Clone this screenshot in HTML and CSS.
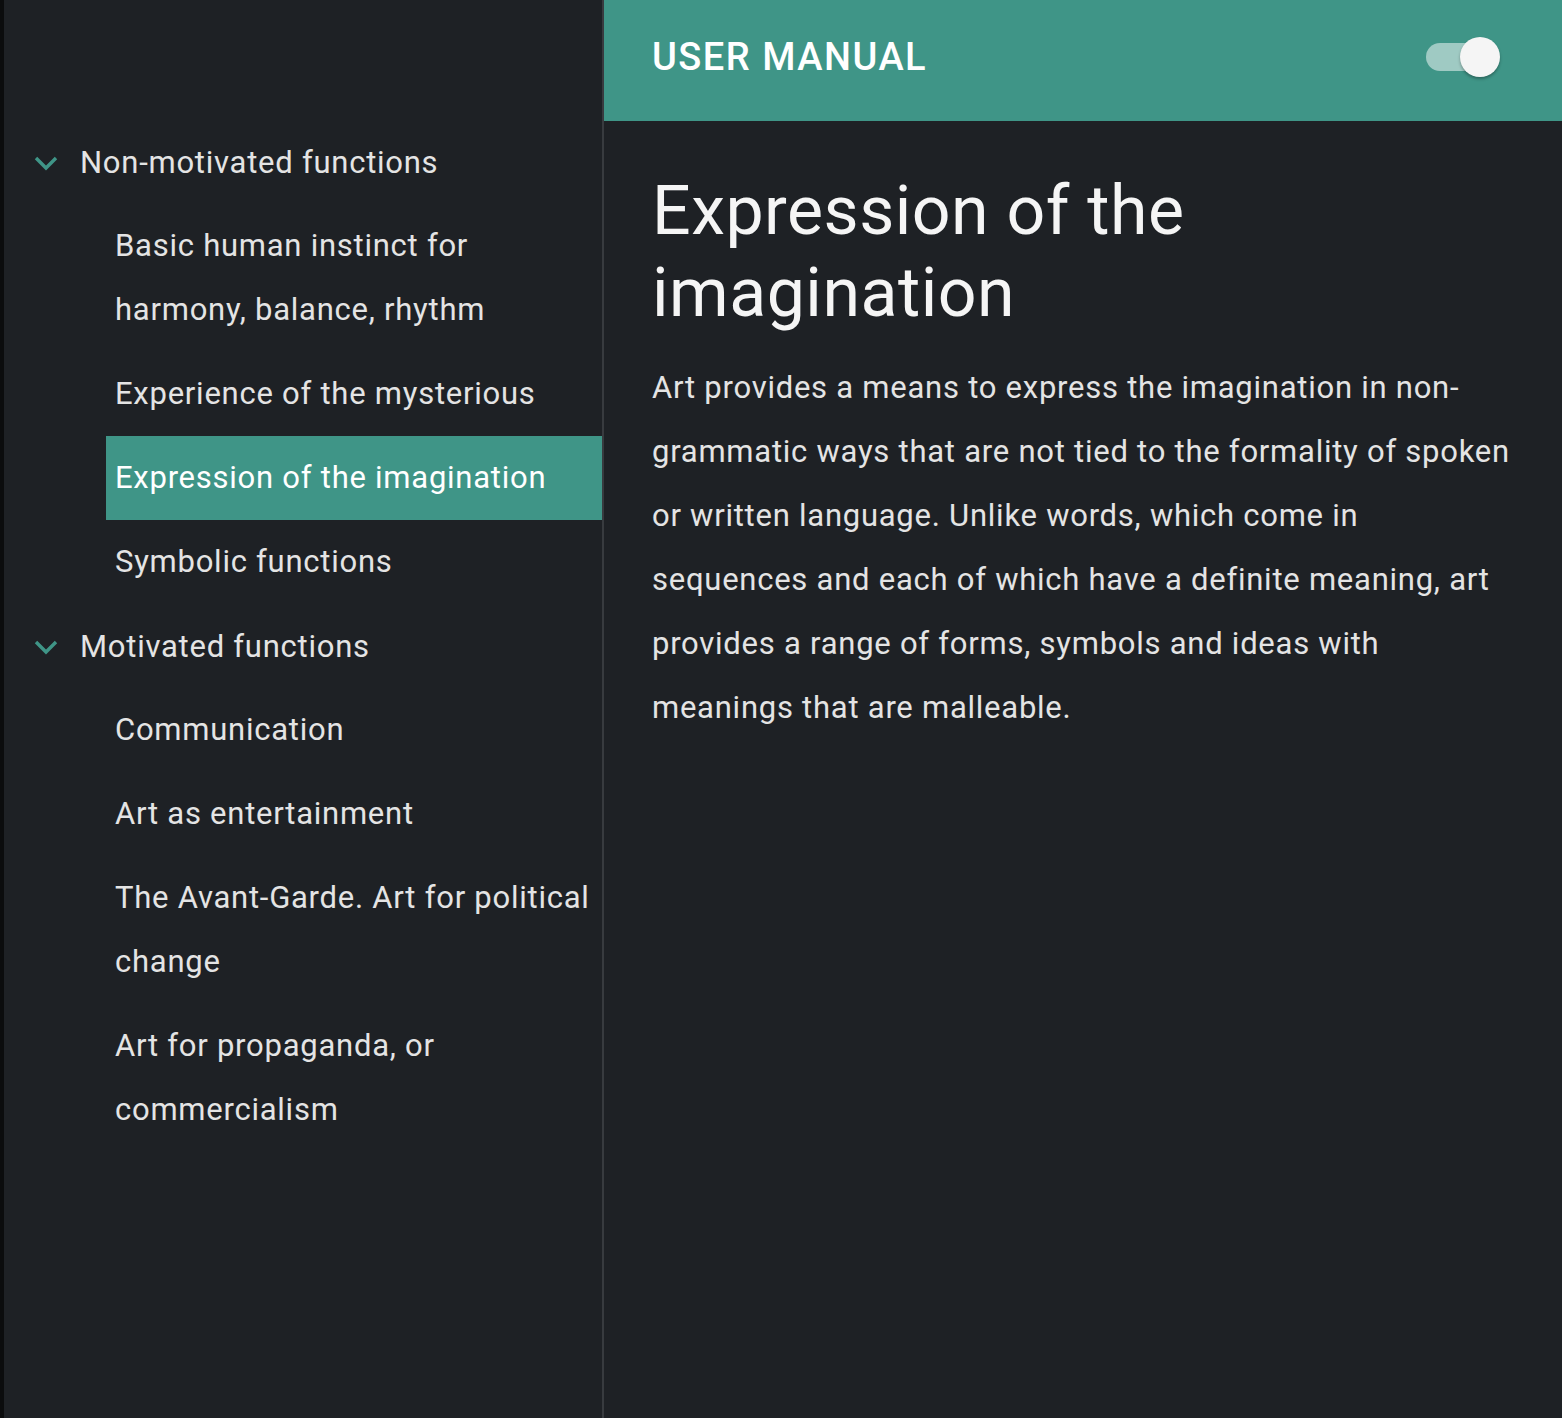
FILE: index.html
```html
<!DOCTYPE html>
<html lang="en">
<head>
<meta charset="utf-8">
<title>User Manual</title>
<link rel="stylesheet" href="styles.css">
</head>
<body>
<div class="app">
  <nav class="sidebar">
    <div class="group">
      <div class="group-title">
        <svg class="chev" viewBox="0 0 24 16" width="24" height="16"><path d="M2 3 L12 13 L22 3" fill="none" stroke="#3f9587" stroke-width="3.4"/></svg>
        <span>Non-motivated functions</span>
      </div>
      <ul class="items">
        <li>Basic human instinct for harmony, balance, rhythm</li>
        <li>Experience of the mysterious</li>
        <li class="active">Expression of the imagination</li>
        <li>Symbolic functions</li>
      </ul>
    </div>
    <div class="group">
      <div class="group-title">
        <svg class="chev" viewBox="0 0 24 16" width="24" height="16"><path d="M2 3 L12 13 L22 3" fill="none" stroke="#3f9587" stroke-width="3.4"/></svg>
        <span>Motivated functions</span>
      </div>
      <ul class="items">
        <li>Communication</li>
        <li>Art as entertainment</li>
        <li>The Avant-Garde. Art for political change</li>
        <li>Art for propaganda, or commercialism</li>
      </ul>
    </div>
  </nav>
  <main class="main">
    <header class="topbar">
      <h1 class="brand">USER MANUAL</h1>
      <div class="toggle"><div class="track"></div><div class="knob"></div></div>
    </header>
    <article class="content">
      <h2 class="title">Expression of the imagination</h2>
      <p class="text">Art provides a means to express the imagination in non-grammatic ways that are not tied to the formality of spoken or written language. Unlike words, which come in sequences and each of which have a definite meaning, art provides a range of forms, symbols and ideas with meanings that are malleable.</p>
    </article>
  </main>
</div>
</body>
</html>
```

FILE: styles.css
```css
* { box-sizing: border-box; }
html, body { margin: 0; padding: 0; height: 100%; }
body {
  background: #1e2125;
  font-family: Roboto, "Liberation Sans", sans-serif;
  color: #e4e4e4;
}
.app {
  display: flex;
  min-height: 1418px;
  border-left: 4px solid #0b0c0d;
}
.sidebar {
  width: 600px;
  flex: none;
  border-right: 2px solid #383b3f;
  padding-top: 120px;
}
.group-title {
  display: flex;
  align-items: center;
  height: 84px;
  padding-left: 30px;
  font-size: 31px;
  letter-spacing: 0.75px;
}
.chev { margin-right: 22px; margin-top: 2px; }
.items {
  list-style: none;
  margin: 0;
  padding: 0 0 0 102px;
}
.items li {
  font-size: 31px;
  line-height: 64px;
  padding: 10px 2px 10px 9px;
  letter-spacing: 0.75px;
}
.items li.active {
  background: #3f9587;
  color: #ffffff;
}
.main { flex: 1; }
.topbar {
  height: 121px;
  background: #3f9587;
  display: flex;
  align-items: center;
  justify-content: space-between;
  padding: 0 62px 7px 48px;
}
.brand {
  margin: 0;
  font-size: 38px;
  font-weight: 500;
  color: #ffffff;
  letter-spacing: 1.5px;
}
.toggle {
  position: relative;
  width: 74px;
  height: 40px;
}
.track {
  position: absolute;
  left: 0;
  top: 6px;
  width: 66px;
  height: 28px;
  border-radius: 14px;
  background: #9fcac3;
}
.knob {
  position: absolute;
  right: 0;
  top: 0;
  width: 40px;
  height: 40px;
  border-radius: 50%;
  background: #f5f5f5;
  box-shadow: 0 2px 3px rgba(0,0,0,0.3);
}
.content {
  padding: 49px 48px 0 48px;
}
.title {
  margin: 0;
  font-size: 68px;
  font-weight: 400;
  line-height: 82px;
  letter-spacing: 0.5px;
  color: #f5f5f5;
}
.text {
  margin: 22px 0 0 0;
  font-size: 31px;
  line-height: 64px;
  letter-spacing: 0.75px;
  color: #e4e4e4;
}
```
